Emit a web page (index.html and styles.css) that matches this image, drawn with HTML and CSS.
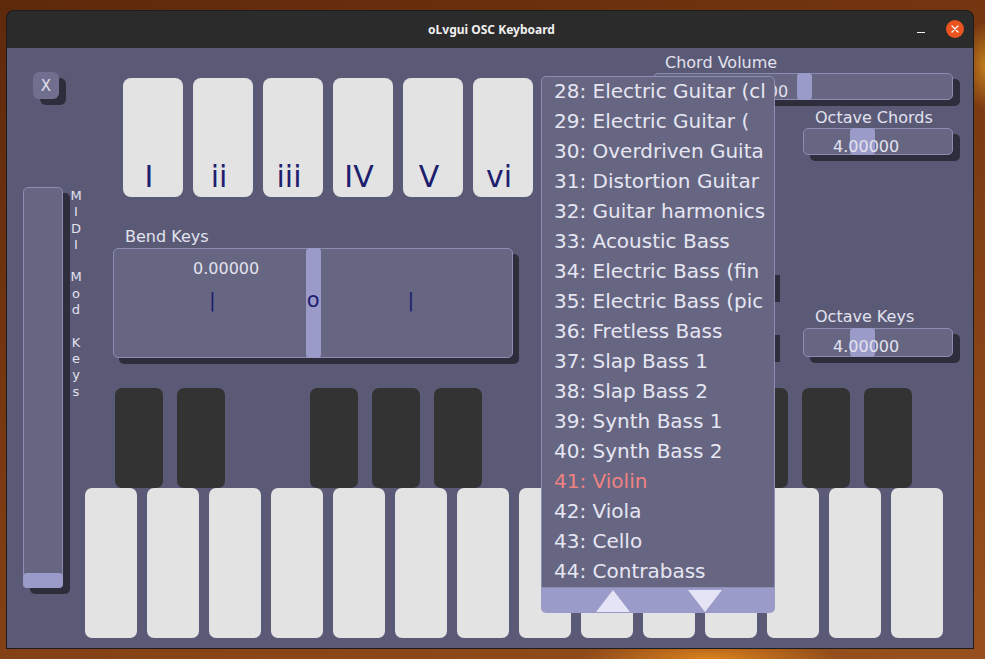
FILE: index.html
```html
<!DOCTYPE html>
<html>
<head>
<meta charset="utf-8">
<title>oLvgui OSC Keyboard</title>
<link rel="stylesheet" href="styles.css">
</head>
<body>
<div class="window">
  <div class="titlebar">
    <span class="title">oLvgui OSC Keyboard</span>
    <div class="winctl">
      <span class="minimize"></span>
      <svg class="close" width="18" height="18" viewBox="0 0 18 18"><circle cx="9" cy="9" r="9" fill="#e95420"/><path d="M6 6 L12 12 M12 6 L6 12" stroke="#fff" stroke-width="1.3" stroke-linecap="round"/></svg>
    </div>
  </div>
  <div class="winbody">
    <div class="leftcol">
      <div class="xbtn">X</div>
      <div class="modrow">
        <div class="vslider"><div class="vhandle"></div></div>
        <div class="vlabel">M<br>I<br>D<br>I<br>&nbsp;<br>M<br>o<br>d<br>&nbsp;<br>K<br>e<br>y<br>s</div>
      </div>
    </div>
    <div class="main">
      <div class="top">
        <div class="topleft">
          <div class="chords">
            <div class="ckey">I</div>
            <div class="ckey">ii</div>
            <div class="ckey">iii</div>
            <div class="ckey">IV</div>
            <div class="ckey">V</div>
            <div class="ckey">vi</div>
          </div>
          <div class="label bendlabel">Bend Keys</div>
          <div class="bend">
            <div class="handle"></div>
            <div class="bval">0.00000</div>
            <div class="ticks"><span class="t1">|</span><span class="t2">o</span><span class="t3">|</span></div>
          </div>
        </div>
        <div class="topright">
          <div class="label cvlabel">Chord Volume</div>
          <div class="hslider cv"><div class="handle"></div><span class="val">0.50000</span></div>
          <div class="lower">
            <div class="colA">
              <div class="ghost g1"></div>
              <div class="ghost g2"></div>
            </div>
            <div class="colB">
              <div class="label oclabel">Octave Chords</div>
              <div class="hslider oc"><div class="handle"></div><span class="val">4.00000</span></div>
              <div class="label oklabel">Octave Keys</div>
              <div class="hslider ok"><div class="handle"></div><span class="val">4.00000</span></div>
            </div>
          </div>
        </div>
      </div>
      <div class="piano">
        <div class="blackrow">
          <div class="bk b1"></div>
          <div class="bk b2"></div>
          <div class="bk b3"></div>
          <div class="bk b2"></div>
          <div class="bk b2"></div>
          <div class="bk b6"></div>
          <div class="bk b2"></div>
          <div class="bk b8"></div>
          <div class="bk b2"></div>
          <div class="bk b2"></div>
        </div>
        <div class="whiterow">
          <div class="wk"></div><div class="wk"></div><div class="wk"></div><div class="wk"></div>
          <div class="wk"></div><div class="wk"></div><div class="wk"></div><div class="wk"></div>
          <div class="wk"></div><div class="wk"></div><div class="wk"></div><div class="wk"></div>
          <div class="wk"></div><div class="wk"></div>
        </div>
      </div>
    </div>
    <div class="popup">
      <div class="plist">
        <div class="pitem">28: Electric Guitar (cl</div>
        <div class="pitem">29: Electric Guitar (</div>
        <div class="pitem">30: Overdriven Guita</div>
        <div class="pitem">31: Distortion Guitar</div>
        <div class="pitem">32: Guitar harmonics</div>
        <div class="pitem">33: Acoustic Bass</div>
        <div class="pitem">34: Electric Bass (fin</div>
        <div class="pitem">35: Electric Bass (pic</div>
        <div class="pitem">36: Fretless Bass</div>
        <div class="pitem">37: Slap Bass 1</div>
        <div class="pitem">38: Slap Bass 2</div>
        <div class="pitem">39: Synth Bass 1</div>
        <div class="pitem">40: Synth Bass 2</div>
        <div class="pitem sel">41: Violin</div>
        <div class="pitem">42: Viola</div>
        <div class="pitem">43: Cello</div>
        <div class="pitem">44: Contrabass</div>
      </div>
      <div class="pscroll">
        <svg width="234" height="25" viewBox="0 0 234 25"><polygon points="55,24 72,2 89,24" fill="#e4e4f6"/><polygon points="147,2 181,2 164,24" fill="#e4e4f6"/></svg>
      </div>
    </div>
  </div>
</div>
</body>
</html>
```

FILE: styles.css
```css
* { box-sizing: border-box; }
html, body { margin: 0; }
body {
  width: 985px;
  height: 659px;
  overflow: hidden;
  padding: 11px 0 0 7px;
  background:
    radial-gradient(ellipse 170px 30px at 72% 100%, rgba(232, 140, 30, 0.85), transparent 75%),
    radial-gradient(ellipse 30px 60px at 100% 10%, rgba(240, 170, 40, 0.6), transparent 75%),
    linear-gradient(160deg, #5e290b 0%, #7a3911 45%, #97501d 100%);
  font-family: "DejaVu Sans", sans-serif;
}

.window {
  width: 966px;
  height: 637px;
  border-radius: 7px 7px 0 0;
  background: #2b2b2b;
  display: flex;
  flex-direction: column;
  box-shadow: 0 0 0 1px #1c1c1c;
}

.titlebar {
  height: 37px;
  display: grid;
  grid-template-columns: 1fr auto 1fr;
  align-items: center;
  color: #f0f0f0;
}
.title {
  grid-column: 2;
  font-family: "Noto Sans", sans-serif;
  font-weight: 700;
  font-size: 12px;
  padding-left: 3px;
}
.winctl {
  grid-column: 3;
  justify-self: end;
  display: flex;
  align-items: center;
  gap: 21px;
  padding-right: 9px;
}
.minimize {
  width: 8px;
  height: 1px;
  background: #f0f0f0;
  margin-top: 5px;
}
.close { display: block; margin-top: -2px; }

.winbody {
  position: relative;
  height: 600px;
  background: #5a5a77;
  display: flex;
}

.label {
  font-size: 16px;
  line-height: 18px;
  color: #e2e2ee;
  white-space: nowrap;
}

/* left column */
.leftcol {
  width: 78px;
  display: flex;
  flex-direction: column;
}
.xbtn {
  margin: 24px 0 0 26px;
  width: 26px;
  height: 27px;
  border-radius: 6px;
  background: #706f90;
  color: #e0e0ee;
  font-size: 15px;
  display: flex;
  align-items: center;
  justify-content: center;
  box-shadow: 7px 6px 0 #2d2d3c;
}
.modrow {
  display: flex;
  margin-top: 88px;
}
.vslider {
  margin-left: 16px;
  width: 40px;
  height: 401px;
  background: #666682;
  border: 1px solid #8c8cb4;
  border-radius: 5px;
  box-shadow: 7px 6px 0 #2d2d3c;
  display: flex;
  flex-direction: column;
  justify-content: flex-end;
}
.vhandle {
  height: 15px;
  background: #9b9bc9;
  border-radius: 4px;
  margin: 0 -1px -1px;
}
.vlabel {
  margin-left: 7px;
  padding-top: 1px;
  width: 12px;
  font-size: 13px;
  line-height: 16.3px;
  text-align: center;
  color: #e2e2ee;
}

/* main */
.main {
  width: 888px;
  display: flex;
  flex-direction: column;
}
.top {
  height: 340px;
  display: flex;
}
.topleft {
  width: 455px;
  padding-top: 30px;
}
.chords {
  display: flex;
  gap: 10px;
  margin-left: 38px;
}
.ckey {
  width: 60px;
  height: 119px;
  background: #e3e3e3;
  border-radius: 8px;
  color: #1e1e6e;
  font-size: 30px;
  line-height: 1;
  display: flex;
  align-items: flex-end;
  justify-content: center;
  padding: 0 8px 5px 0;
}
.bendlabel { margin: 31px 0 0 40px; }
.bend {
  position: relative;
  margin: 2px 0 0 28px;
  width: 400px;
  height: 110px;
  background: #666682;
  border: 1px solid #8c8cb4;
  border-radius: 5px;
  box-shadow: 6px 6px 0 #2d2d3c;
}
.bend .handle {
  position: absolute;
  left: 192px;
  top: -1px;
  bottom: -1px;
  width: 15px;
  background: #9b9bc9;
  border-radius: 4px;
}
.bval {
  position: relative;
  padding: 10px 0 0 79px;
  font-size: 16px;
  line-height: 20px;
  color: #e2e2ee;
}
.ticks {
  position: relative;
  display: flex;
  margin-top: 9px;
  font-size: 20px;
  line-height: 24px;
  color: #1e1e6e;
}
.t1 { margin-left: 95px; }
.t2 { margin-left: 91px; font-size: 21px; }
.t3 { margin-left: 88px; }

/* right controls */
.topright {
  width: 433px;
  padding-top: 6px;
}
.cvlabel { margin-left: 125px; }
.hslider {
  position: relative;
  height: 27px;
  background: #666682;
  border: 1px solid #8c8cb4;
  border-radius: 5px;
  box-shadow: 7px 6px 0 #2d2d3c;
  font-size: 16px;
  line-height: 20px;
  color: #e2e2ee;
  white-space: nowrap;
}
.hslider .handle {
  position: absolute;
  top: -1px;
  bottom: -1px;
  width: 15px;
  background: #9b9bc9;
  border-radius: 4px;
}
.val { position: relative; }
.cv {
  margin: 1px 0 0 113px;
  width: 300px;
  padding: 8px 0 0 68px;
}
.cv .handle { left: 143px; }
.lower { display: flex; }
.colA { width: 263px; }
.ghost {
  margin-left: 13px;
  width: 220px;
  height: 27px;
  background: #666682;
  box-shadow: 7px 7px 0 #2d2d3c;
}
.g1 { margin-top: 168px; }
.g2 { margin-top: 33px; }
.colB { padding-top: 9px; }
.oclabel { margin-left: 12px; }
.oc {
  margin-top: 1px;
  width: 150px;
  padding: 8px 0 0 29px;
}
.oc .handle, .ok .handle { left: 46px; width: 25px; }
.oklabel { margin: 153px 0 0 12px; }
.ok {
  margin-top: 2px;
  width: 150px;
  height: 29px;
  padding: 8px 0 0 29px;
}

/* piano */
.piano {
  display: flex;
  flex-direction: column;
}
.blackrow {
  height: 100px;
  display: flex;
}
.bk {
  width: 48px;
  height: 100px;
  background: #333333;
  border-radius: 7px;
}
.b1 { margin-left: 30px; }
.b2 { margin-left: 14px; }
.b3 { margin-left: 85px; }
.b6 { margin-left: 67px; }
.b8 { margin-left: 81px; }
.whiterow {
  display: flex;
  gap: 10px;
}
.wk {
  width: 52px;
  height: 150px;
  background: #e3e3e3;
  border-radius: 7px;
}

/* popup list */
.popup {
  position: absolute;
  left: 534px;
  top: 28px;
  width: 234px;
}
.plist {
  height: 512px;
  background: #666682;
  border: 1px solid #8c8cb4;
  border-radius: 5px 5px 0 0;
  padding-left: 12px;
  overflow: hidden;
}
.pitem {
  height: 30px;
  line-height: 30px;
  font-size: 20px;
  color: #e6e6f3;
  white-space: nowrap;
}
.pitem:first-child { margin-top: -1px; }
.pitem.sel { color: #f08282; }
.pscroll {
  height: 25px;
  background: #9b9bc9;
  border-radius: 0 0 5px 5px;
}
.pscroll svg { display: block; }
```
